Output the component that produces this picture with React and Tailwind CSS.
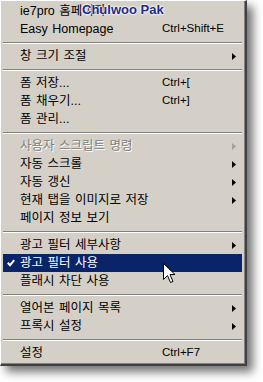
import React from "react";

const items = [
	{ label: "ie7pro 홈페이지" },
	{ label: "Easy Homepage", shortcut: "Ctrl+Shift+E" },
	{ sep: true },
	{ label: "창 크기 조절", sub: true },
	{ sep: true },
	{ label: "폼 저장...", shortcut: "Ctrl+[" },
	{ label: "폼 채우기...", shortcut: "Ctrl+]" },
	{ label: "폼 관리..." },
	{ sep: true },
	{ label: "사용자 스크립트 명령", sub: true, disabled: true },
	{ label: "자동 스크롤", sub: true },
	{ label: "자동 갱신", sub: true },
	{ label: "현재 탭을 이미지로 저장", sub: true },
	{ label: "페이지 정보 보기" },
	{ sep: true },
	{ label: "광고 필터 세부사항", sub: true },
	{ label: "광고 필터 사용", checked: true, active: true },
	{ label: "플래시 차단 사용" },
	{ sep: true },
	{ label: "열어본 페이지 목록", sub: true },
	{ label: "프록시 설정", sub: true },
	{ sep: true },
	{ label: "설정", shortcut: "Ctrl+F7" },
];

const Arrow = ({ color }) => (
	<svg width="4" height="7" viewBox="0 0 4 7">
		<path d="M0 0 L4 3.5 L0 7 Z" fill={color} />
	</svg>
);

const MenuRow = ({ item }) => {
	if (item.sep) {
		return (
			<div className="pt-[4px] pb-[3px]">
				<div className="h-px bg-[#808080]" />
				<div className="h-px bg-white" />
			</div>
		);
	}
	const text = item.active
		? "text-white"
		: item.disabled
			? "text-[#808080] [text-shadow:1px_1px_0_#fff]"
			: "text-black";
	return (
		<div
			className={`relative flex h-[18px] items-center ${
				item.active ? "bg-[#0a246a]" : ""
			} ${text}`}
		>
			<div className="flex w-[17px] shrink-0 items-center pl-[4px]">
				{item.checked && (
					<svg width="8" height="8" viewBox="0 0 8 8">
						<path
							d="M0.8 3.8 L3 6.2 L7.2 1.2"
							fill="none"
							stroke="white"
							strokeWidth="2"
						/>
					</svg>
				)}
			</div>
			<div className="w-[142px] shrink-0 whitespace-nowrap [word-spacing:1px]">
				{item.label}
			</div>
			<div className="flex-1 whitespace-nowrap text-[11.5px]">{item.shortcut}</div>
			{item.sub && (
				<div className="pr-[6px]">
					<Arrow
						color={
							item.disabled ? "#a0a0a0" : item.active ? "#fff" : "#000"
						}
					/>
				</div>
			)}
		</div>
	);
};

const App = () => {
	return (
		<div className="relative h-[382px] w-[263px] overflow-hidden bg-white">
			<div className="w-[247px] border-t border-l border-t-white border-l-white border-r-2 border-b-2 border-r-[#404040] border-b-[#404040] bg-[#d4d0c8] shadow-[6px_6px_9px_rgba(0,0,0,0.55)]">
				<div className="border-r border-b border-r-[#808080] border-b-[#808080] px-[2px] py-[1px] font-['Liberation_Sans','Noto_Sans_CJK_KR',sans-serif] text-[12.5px] leading-none">
					{items.map((item, i) => (
						<MenuRow key={i} item={item} />
					))}
				</div>
			</div>

			{/* caption over the first row */}
			<div className="absolute left-[82px] top-[3px] font-['Liberation_Sans',sans-serif] text-[13px] font-bold leading-none text-[#1c2a88] [text-shadow:0_0_2px_#fff,0_0_2px_#fff,0_0_3px_#fff]">
				Chulwoo Pak
			</div>

			{/* mouse pointer */}
			<svg
				className="absolute left-[163px] top-[263px]"
				width="13"
				height="21"
				viewBox="0 0 13 21"
			>
				<path
					d="M0.5 0.5 L0.5 16.5 L4.5 12.5 L7.5 19.5 L10 18.5 L7 11.5 L12 11.5 Z"
					fill="white"
					stroke="black"
					strokeWidth="1"
					strokeLinejoin="miter"
				/>
			</svg>
		</div>
	);
};

export default App;
